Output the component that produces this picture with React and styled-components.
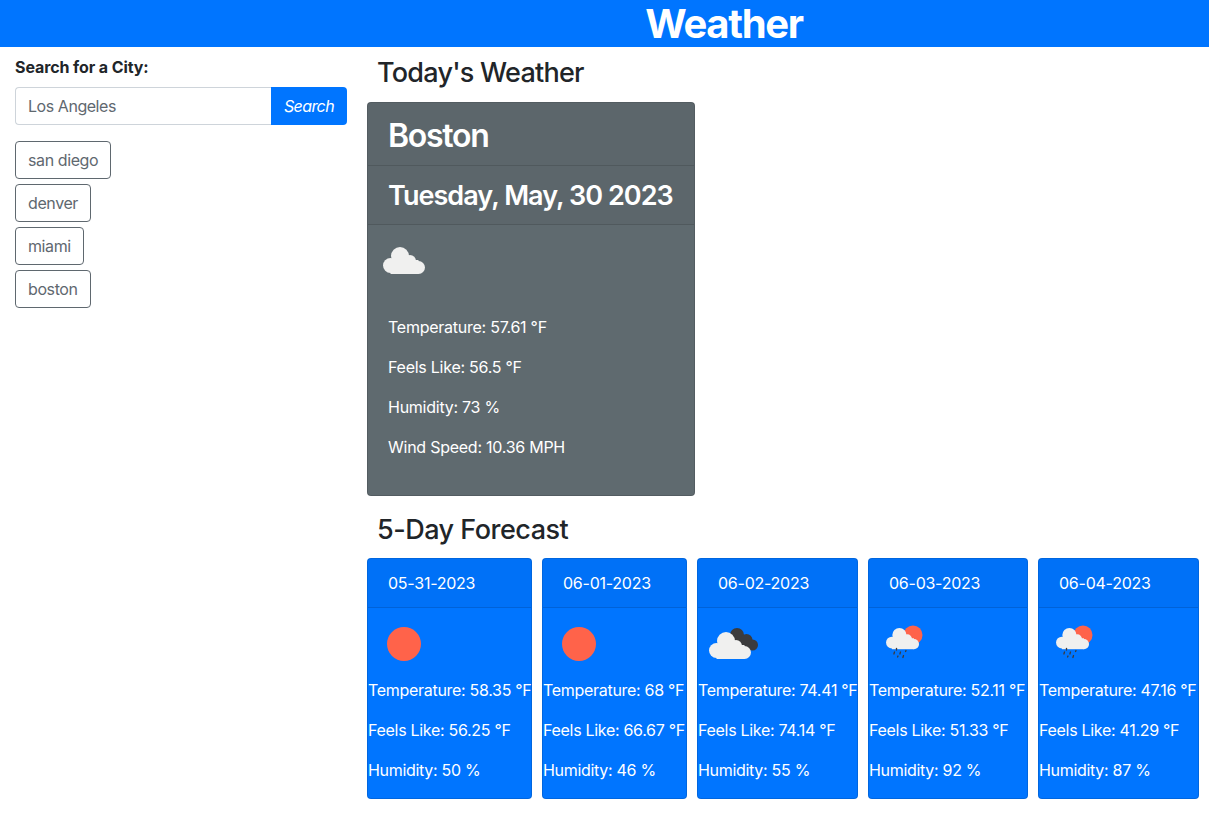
import React from "react";
import styled, { createGlobalStyle } from "styled-components";

const GlobalStyle = createGlobalStyle`
  * {
    box-sizing: border-box;
  }
  body {
    margin: 0;
    background: #fff;
    color: #212529;
    font-family: Inter, "Liberation Sans", sans-serif;
    font-size: 16px;
    line-height: 24px;
    letter-spacing: -0.25px;
  }
`;

const forecast = [
  { date: "05-31-2023", icon: "sun", temp: "58.35", feels: "56.25", humidity: 50, width: 165 },
  { date: "06-01-2023", icon: "sun", temp: "68", feels: "66.67", humidity: 46, width: 145 },
  { date: "06-02-2023", icon: "broken", temp: "74.41", feels: "74.14", humidity: 55, width: 161 },
  { date: "06-03-2023", icon: "rain", temp: "52.11", feels: "51.33", humidity: 92, width: 160 },
  { date: "06-04-2023", icon: "rain", temp: "47.16", feels: "41.29", humidity: 87, width: 161 },
];

const cities = ["san diego", "denver", "miami", "boston"];

function CloudShape({ fill = "#f0f0ef", transform }) {
  return (
    <g fill={fill} transform={transform}>
      <circle cx="21" cy="20" r="9" />
      <circle cx="31" cy="25" r="6" />
      <circle cx="11.5" cy="29.5" r="7.5" />
      <circle cx="39.5" cy="31.5" r="6.5" />
      <rect x="11.5" y="24" width="28" height="14" />
    </g>
  );
}

function WeatherIcon({ kind }) {
  return (
    <IconSvg viewBox="0 0 50 50" $kind={kind}>
      {kind === "sun" && <circle cx="25" cy="25" r="17" fill="#ff634a" />}
      {kind === "cloud" && <CloudShape />}
      {kind === "broken" && (
        <>
          <g fill="#3b3b3d">
            <circle cx="28" cy="16" r="7" />
            <circle cx="37.5" cy="21" r="6" />
            <circle cx="43.5" cy="26" r="5.5" />
            <rect x="26" y="18" width="16" height="13" />
          </g>
          <CloudShape transform="translate(-4 2)" />
        </>
      )}
      {kind === "rain" && (
        <>
          <circle cx="33" cy="16" r="9.5" fill="#ff634a" />
          <CloudShape transform="translate(2.9 0.35) scale(0.786)" />
          <g stroke="#3b3b3d" strokeWidth="1.3" strokeLinecap="round">
            <path d="M16.5 29.5v1.5" />
            <path d="M14.5 33l-.6 2" />
            <path d="M20.5 33l-.6 2" />
            <path d="M26 31.5l-.4 1" />
            <path d="M18 37l-.4 1" />
            <path d="M23.5 36.5l-.6 2" />
          </g>
        </>
      )}
    </IconSvg>
  );
}

export default function App() {
  return (
    <>
      <GlobalStyle />
      <Header>
        <Title>Weather</Title>
      </Header>
      <Layout>
        <Sidebar>
          <SearchLabel>Search for a City:</SearchLabel>
          <SearchGroup>
            <SearchInput type="text" defaultValue="Los Angeles" />
            <SearchButton type="button">Search</SearchButton>
          </SearchGroup>
          <CityList>
            {cities.map((city) => (
              <CityButton type="button" key={city}>
                {city}
              </CityButton>
            ))}
          </CityList>
        </Sidebar>
        <Main>
          <SectionTitle>Today's Weather</SectionTitle>
          <TodayCard>
            <TodayCity>Boston</TodayCity>
            <TodayDate>Tuesday, May, 30 2023</TodayDate>
            <TodayBody>
              <WeatherIcon kind="cloud" />
              <TodayLine>Temperature: 57.61 °F</TodayLine>
              <TodayLine>Feels Like: 56.5 °F</TodayLine>
              <TodayLine>Humidity: 73 %</TodayLine>
              <TodayLine>Wind Speed: 10.36 MPH</TodayLine>
            </TodayBody>
          </TodayCard>
          <ForecastTitle>5-Day Forecast</ForecastTitle>
          <ForecastRow>
            {forecast.map((day) => (
              <ForecastCard key={day.date} $width={day.width}>
                <ForecastDate>{day.date}</ForecastDate>
                <WeatherIcon kind={day.icon} />
                <ForecastLine>Temperature: {day.temp} °F</ForecastLine>
                <ForecastLine>Feels Like: {day.feels} °F</ForecastLine>
                <ForecastLine>Humidity: {day.humidity} %</ForecastLine>
              </ForecastCard>
            ))}
          </ForecastRow>
        </Main>
      </Layout>
    </>
  );
}

const Header = styled.header`
  height: 47px;
  padding-left: 239px;
  background: #0075ff;
  text-align: center;
`;

const Title = styled.h1`
  margin: 0;
  color: #fff;
  font-size: 40px;
  font-weight: 700;
  line-height: 48px;
  letter-spacing: -1.3px;
`;

const Layout = styled.div`
  display: flex;
  align-items: flex-start;
`;

const Sidebar = styled.aside`
  flex: 0 0 362px;
  padding: 8px 15px 0;
  width: 362px;
`;

const SearchLabel = styled.label`
  display: block;
  margin-bottom: 8px;
  color: #212529;
  font-size: 16px;
  font-weight: 700;
  letter-spacing: -0.1px;
`;

const SearchGroup = styled.div`
  display: flex;
  width: 332px;
  height: 38px;
`;

const SearchInput = styled.input`
  flex: 1;
  min-width: 0;
  padding: 6px 12px;
  border: 1px solid #ced4da;
  border-right: 0;
  border-radius: 4px 0 0 4px;
  color: #5f686f;
  font-family: inherit;
  font-size: 16px;
  line-height: 24px;
  letter-spacing: -0.45px;
`;

const SearchButton = styled.button`
  width: 76px;
  border: 0;
  border-radius: 0 4px 4px 0;
  background: #0075ff;
  color: #fff;
  font-family: inherit;
  font-size: 16px;
  font-style: italic;
  letter-spacing: -0.6px;
`;

const CityList = styled.div`
  display: flex;
  flex-direction: column;
  align-items: flex-start;
  gap: 5px;
  margin-top: 16px;
`;

const CityButton = styled.button`
  height: 38px;
  padding: 6px 12px;
  border: 1px solid #5f686f;
  border-radius: 4px;
  background: #fff;
  color: #5f686f;
  font-family: inherit;
  font-size: 16px;
  line-height: 24px;
  letter-spacing: -0.4px;
`;

const Main = styled.main`
  flex: 1;
  min-width: 0;
  padding: 9px 10px 0 5px;
`;

const SectionTitle = styled.h2`
  margin: 0 0 12px 10px;
  color: #212529;
  font-size: 27px;
  font-weight: 500;
  line-height: 34px;
  letter-spacing: -0.75px;
`;

const ForecastTitle = styled(SectionTitle)`
  margin-top: 17px;
  margin-bottom: 11px;
  letter-spacing: -0.5px;
`;

const TodayCard = styled.section`
  width: 328px;
  height: 394px;
  border: 1px solid rgba(0, 0, 0, 0.125);
  border-radius: 4px;
  background: #5f6a6f;
  color: #fff;
`;

const TodayCity = styled.h3`
  margin: 0;
  padding: 14px 20px 0;
  height: 63px;
  border-bottom: 1px solid rgba(0, 0, 0, 0.125);
  background: rgba(0, 0, 0, 0.03);
  font-size: 32px;
  font-weight: 600;
  line-height: 38px;
  letter-spacing: -1.3px;
`;

const TodayDate = styled.h4`
  margin: 0;
  padding: 13px 20px 0;
  height: 59px;
  border-bottom: 1px solid rgba(0, 0, 0, 0.125);
  background: rgba(0, 0, 0, 0.03);
  font-size: 27px;
  font-weight: 600;
  line-height: 34px;
  letter-spacing: -0.95px;
  white-space: nowrap;
`;

const TodayBody = styled.div`
  padding-bottom: 16px;
`;

const TodayLine = styled.p`
  margin: 0 0 16px 20px;
`;

const ForecastRow = styled.div`
  display: flex;
  gap: 10px;
`;

const ForecastCard = styled.article`
  width: ${(props) => props.$width}px;
  height: 241px;
  border: 1px solid rgba(0, 0, 0, 0.125);
  border-radius: 4px;
  background: #0075ff;
  color: #fff;
`;

const ForecastDate = styled.div`
  height: 49px;
  padding: 12px 20px;
  border-bottom: 1px solid rgba(0, 0, 0, 0.125);
  background: rgba(0, 0, 0, 0.03);
`;

const ForecastLine = styled.p`
  margin: 0 0 16px;
  white-space: nowrap;
  letter-spacing: -0.3px;
`;

const IconSvg = styled.svg`
  display: block;
  width: 50px;
  height: 50px;
  margin: 11px 0 ${(props) => (props.$kind === "cloud" ? "29px" : "9px")} 11px;
`;
